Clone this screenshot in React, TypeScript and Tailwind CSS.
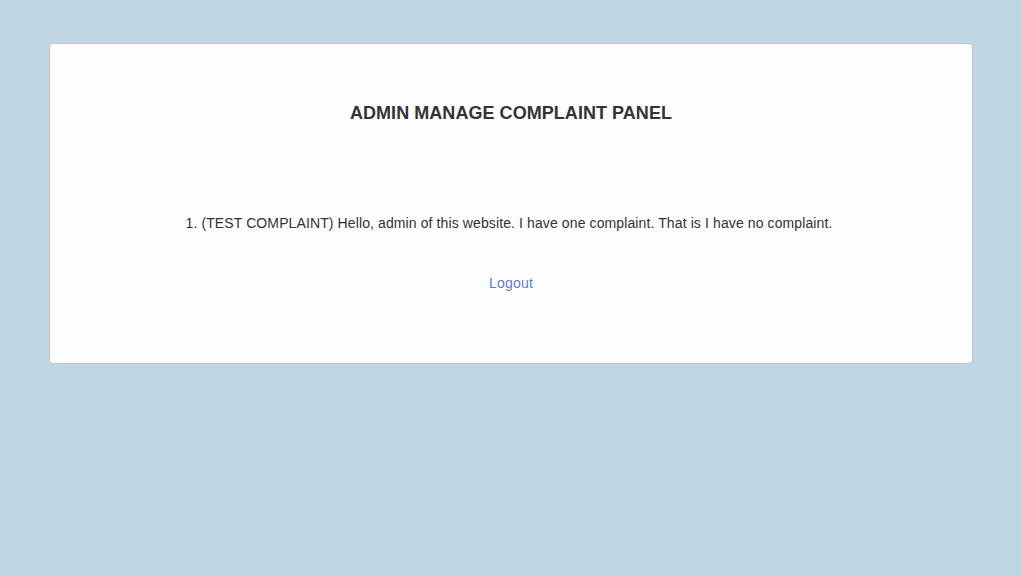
export default function App() {
  return (
    <div
      className="min-h-[576px] w-full bg-[#c0d6e4] pt-[43px]"
      style={{ fontFamily: '"Liberation Sans", Arial, sans-serif' }}
    >
      <div className="ml-[49px] w-[924px] rounded-[4px] border border-[#c4c4c4] bg-[#fdfdfd] pt-[59px] pb-[68px] text-center text-[#333333]">
        <h1 className="text-[18px] leading-[20px] font-bold tracking-[0.05px]">
          ADMIN MANAGE COMPLAINT PANEL
        </h1>
        <p className="mt-[90px] pr-[4px] text-[14px] leading-[20px] tracking-[0.11px]">
          1. (TEST COMPLAINT) Hello, admin of this website. I have one complaint. That is I have no complaint.
        </p>
        <a
          href="#"
          className="mt-[40px] inline-block text-[14px] leading-[20px] tracking-[0.2px] text-[#5a7dc6]"
        >
          Logout
        </a>
      </div>
    </div>
  );
}
